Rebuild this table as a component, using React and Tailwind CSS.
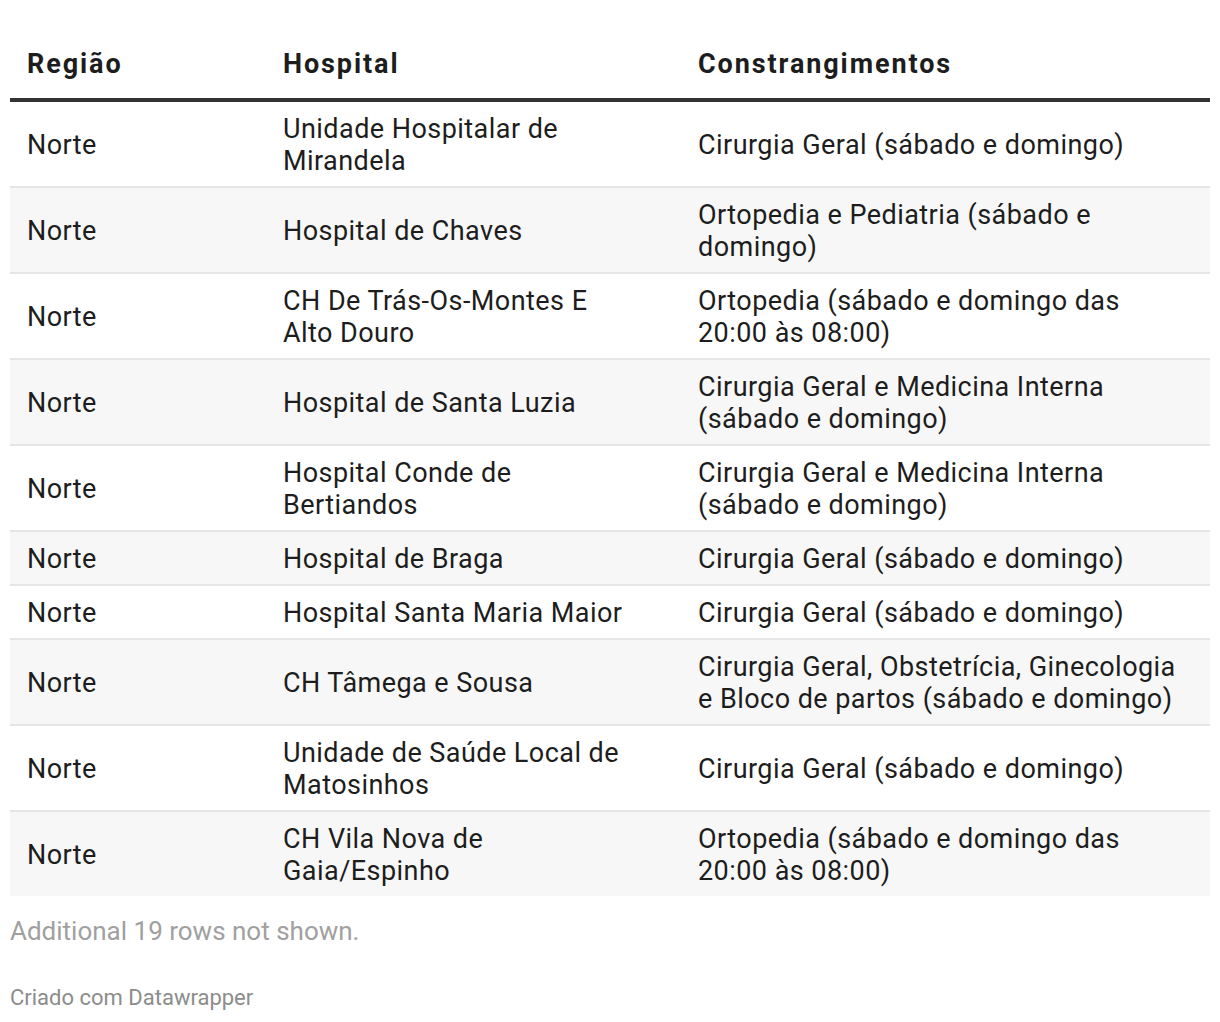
import React from 'react'

const rows = [
  ['Norte', 'Unidade Hospitalar de Mirandela', 'Cirurgia Geral (sábado e domingo)'],
  ['Norte', 'Hospital de Chaves', 'Ortopedia e Pediatria (sábado e domingo)'],
  ['Norte', 'CH De Trás-Os-Montes E Alto Douro', 'Ortopedia (sábado e domingo das 20:00 às 08:00)'],
  ['Norte', 'Hospital de Santa Luzia', 'Cirurgia Geral e Medicina Interna (sábado e domingo)'],
  ['Norte', 'Hospital Conde de Bertiandos', 'Cirurgia Geral e Medicina Interna (sábado e domingo)'],
  ['Norte', 'Hospital de Braga', 'Cirurgia Geral (sábado e domingo)'],
  ['Norte', 'Hospital Santa Maria Maior', 'Cirurgia Geral (sábado e domingo)'],
  ['Norte', 'CH Tâmega e Sousa', 'Cirurgia Geral, Obstetrícia, Ginecologia e Bloco de partos (sábado e domingo)'],
  ['Norte', 'Unidade de Saúde Local de Matosinhos', 'Cirurgia Geral (sábado e domingo)'],
  ['Norte', 'CH Vila Nova de Gaia/Espinho', 'Ortopedia (sábado e domingo das 20:00 às 08:00)'],
]

export default function App() {
  return (
    <div className="w-[1220px] min-h-[1022px] bg-white text-[#1d1d1d] font-['Roboto',sans-serif]">
      <div className="ml-[10px] w-[1200px] pt-[48px]">
        <div className="grid grid-cols-[256px_415px_529px] border-b-4 border-[#333333] pb-[18px] text-[27px] leading-[32px] font-bold tracking-[1.9px]">
          <div className="pl-[17px]">Região</div>
          <div className="pl-[17px] pr-[51px]">Hospital</div>
          <div className="pl-[17px] pr-[17px]">Constrangimentos</div>
        </div>
        {rows.map((r, i) => (
          <div
            key={i}
            className={
              'grid grid-cols-[256px_415px_529px] items-center pt-[11px] pb-[9px] text-[27px] leading-[32px] tracking-[0.45px] ' +
              (i % 2 === 1 ? 'bg-[#f7f7f7] ' : 'bg-white ') +
              (i < rows.length - 1 ? 'border-b-2 border-[#e6e6e6]' : '')
            }
          >
            <div className="pl-[17px]">{r[0]}</div>
            <div className="pl-[17px] pr-[51px]">{r[1]}</div>
            <div className="pl-[17px] pr-[20px]">{r[2]}</div>
          </div>
        ))}
        <div className="mt-[19px] text-[26px] leading-[32px] text-[#a0a0a0]">Additional 19 rows not shown.</div>
        <div className="mt-[38px] text-[22px] leading-[26px] text-[#8c8c8c]">Criado com Datawrapper</div>
      </div>
    </div>
  )
}
